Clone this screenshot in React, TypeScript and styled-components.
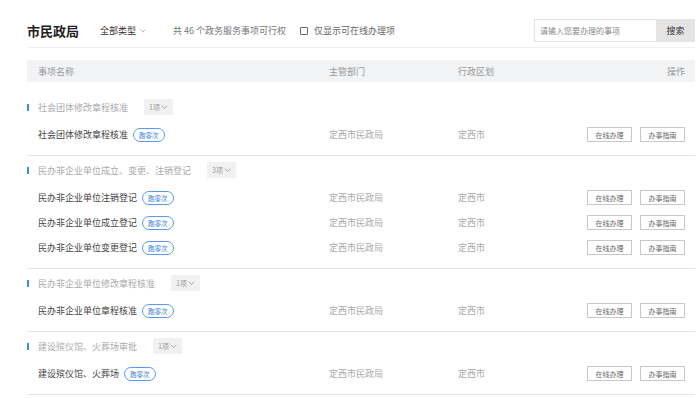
import React from "react";
import styled, { createGlobalStyle } from "styled-components";

const GlobalStyle = createGlobalStyle`
  html, body {
    margin: 0;
    padding: 0;
    background: #fff;
    font-family: "Noto Sans CJK SC", "Noto Sans", sans-serif;
  }
`;

const Page = styled.div`
  padding: 0 5px 0 27px;
  width: 700px;
  box-sizing: border-box;
`;

const Header = styled.div`
  display: flex;
  align-items: center;
  height: 23px;
  padding: 19px 0 5px;
  border-bottom: 1px solid #f0f0f0;
`;

const Title = styled.h1`
  margin: 0 21px 0 0;
  font-size: 13px;
  font-weight: 700;
  color: #222;
  line-height: 1;
`;

const TypeSelect = styled.div`
  display: flex;
  align-items: center;
  gap: 4px;
  font-size: 9px;
  color: #333;
  margin-right: 27px;
`;

const Summary = styled.span`
  font-size: 9px;
  color: #777;
  margin-right: 14px;
`;

const CheckLabel = styled.label`
  display: flex;
  align-items: center;
  gap: 6px;
  font-size: 9px;
  color: #666;
`;

const CheckBox = styled.span`
  width: 6px;
  height: 6px;
  border: 1px solid #666;
  border-radius: 1px;
`;

const Search = styled.div`
  margin-left: auto;
  display: flex;
  height: 23px;
`;

const SearchInput = styled.div`
  width: 116px;
  border: 1px solid #e2e2e2;
  border-right: none;
  padding-left: 5px;
  display: flex;
  align-items: center;
  font-size: 8px;
  color: #888;
`;

const SearchButton = styled.div`
  width: 39px;
  background: #e4e4e4;
  display: flex;
  align-items: center;
  justify-content: center;
  font-size: 9px;
  color: #333;
`;

const Grid = styled.div`
  display: grid;
  grid-template-columns: 291px 129px 1fr auto;
  align-items: center;
  padding: 0 10px 0 11px;
`;

const TableHead = styled(Grid)`
  margin-top: 12px;
  height: 22px;
  background: #f2f3f5;
  font-size: 9px;
  color: #999;
`;

const Right = styled.span`
  text-align: right;
`;

const List = styled.div`
  margin-top: 11px;
`;

const Group = styled.div`
  padding: 6px 0 8px;
  border-bottom: 1px solid #e6e6e6;
`;

const GroupHead = styled.div`
  display: flex;
  align-items: center;
  height: 16px;
  margin-bottom: 7px;
`;

const Bar = styled.span`
  width: 2px;
  height: 7px;
  background: #3a8ee6;
  margin-right: 9px;
`;

const GroupTitle = styled.span`
  font-size: 9px;
  color: #aaa;
  margin-right: 16px;
`;

const Count = styled.span`
  display: flex;
  align-items: center;
  gap: 1px;
  height: 16px;
  padding: 0 5px 0 5px;
  background: #f1f1f1;
  font-size: 7px;
  color: #999;
`;

const Row = styled(Grid)`
  height: 25px;
`;

const Name = styled.span`
  display: flex;
  align-items: center;
  gap: 5px;
  font-size: 9px;
  color: #444;
`;

const Tag = styled.span`
  height: 12px;
  padding: 0 5px;
  border: 1px solid #5a9af0;
  border-radius: 7px;
  font-size: 6.5px;
  color: #3a7fe0;
  display: flex;
  align-items: center;
`;

const Cell = styled.span`
  font-size: 9px;
  color: #aaa;
`;

const Ops = styled.div`
  display: flex;
  gap: 8px;
`;

const OpButton = styled.span`
  width: 43px;
  height: 13px;
  border: 1px solid #c8c8c8;
  font-size: 7px;
  color: #666;
  display: flex;
  align-items: center;
  justify-content: center;
`;

const Chevron = ({ size = 6 }: { size?: number }) => (
  <svg width={size} height={size * 0.6} viewBox="0 0 10 6" fill="none">
    <polyline points="1,1 5,5 9,1" stroke="#888" strokeWidth="1" />
  </svg>
);

type Item = { name: string };
type GroupData = { title: string; items: Item[] };

const groups: GroupData[] = [
  { title: "社会团体修改章程核准", items: [{ name: "社会团体修改章程核准" }] },
  {
    title: "民办非企业单位成立、变更、注销登记",
    items: [
      { name: "民办非企业单位注销登记" },
      { name: "民办非企业单位成立登记" },
      { name: "民办非企业单位变更登记" },
    ],
  },
  { title: "民办非企业单位修改章程核准", items: [{ name: "民办非企业单位章程核准" }] },
  { title: "建设殡仪馆、火葬场审批", items: [{ name: "建设殡仪馆、火葬场" }] },
];

export default function App() {
  return (
    <Page>
      <GlobalStyle />
      <Header>
        <Title>市民政局</Title>
        <TypeSelect>
          全部类型 <Chevron />
        </TypeSelect>
        <Summary>共 46 个政务服务事项可行权</Summary>
        <CheckLabel>
          <CheckBox />
          仅显示可在线办理项
        </CheckLabel>
        <Search>
          <SearchInput>请输入您要办理的事项</SearchInput>
          <SearchButton>搜索</SearchButton>
        </Search>
      </Header>
      <TableHead>
        <span>事项名称</span>
        <span>主管部门</span>
        <span>行政区划</span>
        <Right>操作</Right>
      </TableHead>
      <List>
        {groups.map((g) => (
          <Group key={g.title}>
            <GroupHead>
              <Bar />
              <GroupTitle>{g.title}</GroupTitle>
              <Count>
                {g.items.length}项<Chevron size={7} />
              </Count>
            </GroupHead>
            {g.items.map((it) => (
              <Row key={it.name}>
                <Name>
                  {it.name}
                  <Tag>跑零次</Tag>
                </Name>
                <Cell>定西市民政局</Cell>
                <Cell>定西市</Cell>
                <Ops>
                  <OpButton>在线办理</OpButton>
                  <OpButton>办事指南</OpButton>
                </Ops>
              </Row>
            ))}
          </Group>
        ))}
      </List>
    </Page>
  );
}
